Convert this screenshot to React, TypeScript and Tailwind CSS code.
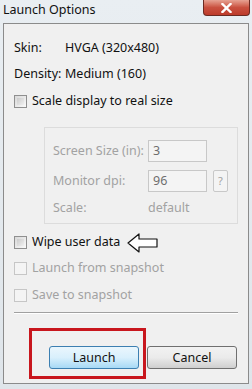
import React from "react";

// Small Win7-style checkbox
function Check({ disabled = false }: { disabled?: boolean }) {
  return (
    <span
      className={
        disabled
          ? "w-[13px] h-[13px] border border-[#c6c6c6] bg-[#f4f4f4] shrink-0"
          : "w-[13px] h-[13px] border border-[#8f8f8f] bg-gradient-to-br from-[#d8d8d8] to-[#fafafa] shrink-0 p-[2px]"
      }
    >
      {!disabled && <span className="block w-full h-full bg-gradient-to-br from-[#cbcbcb] to-[#f0f0f0]" />}
    </span>
  );
}

function CheckRow({ label, disabled = false }: { label: string; disabled?: boolean }) {
  return (
    <div className="flex items-center h-[20px] gap-[5px]">
      <Check disabled={disabled} />
      <span className={disabled ? "text-[#a2a2a2]" : "text-[#111]"}>{label}</span>
    </div>
  );
}

export default function App() {
  return (
    <div
      className="w-[252px] h-[389px] flex flex-col bg-gradient-to-b from-[#e9eef2] to-[#dfe5ea] overflow-hidden"
      style={{ fontFamily: '"Noto Sans", "Open Sans", sans-serif' }}
    >
      {/* title bar */}
      <div className="h-[23px] flex items-start justify-between pl-[3px] shrink-0">
        <span className="text-[12.5px] leading-[20px] text-[#111]">Launch Options</span>
        <div className="w-[47px] h-[16px] mr-[2px] rounded-b-[4px] border border-t-0 border-[#6b2a22] bg-gradient-to-b from-[#e6a293] via-[#c9503f] to-[#bd3b2b] flex items-center justify-center">
          <svg width="11" height="10" viewBox="0 0 11 10">
            <path d="M1.5 1 L9.5 9 M9.5 1 L1.5 9" stroke="#fff" strokeWidth="2.4" strokeLinecap="square" />
          </svg>
        </div>
      </div>

      {/* panel */}
      <div className="relative mx-[3px] mb-[5px] flex-1 border border-[#8b8b8b] bg-[#f0f0f0] text-[12.5px] leading-[20px] pl-[10px] pt-[14px]">
        <div className="flex h-[20px] items-center text-[#111]">
          <span className="w-[51px]">Skin:</span>
          <span>HVGA (320x480)</span>
        </div>
        <div className="flex h-[20px] items-center mt-[6px] text-[#111]">
          <span className="w-[51px]">Density:</span>
          <span>Medium (160)</span>
        </div>
        <div className="mt-[7px]">
          <CheckRow label="Scale display to real size" />
        </div>

        {/* disabled group */}
        <div className="ml-[30px] mt-[16px] w-[194px] h-[97px] border border-[#dcdcdc] pl-[8px] pt-[12px] text-[#a2a2a2]">
          <div className="flex items-center h-[22px]">
            <span className="w-[95px]">Screen Size (in):</span>
            <span className="w-[59px] h-[22px] border border-[#c8c8c8] bg-[#f4f4f4] pl-[4px] leading-[20px] text-[#6e6e6e]">3</span>
          </div>
          <div className="flex items-center h-[22px] mt-[8px]">
            <span className="w-[95px]">Monitor dpi:</span>
            <span className="w-[59px] h-[22px] border border-[#c8c8c8] bg-[#f4f4f4] pl-[4px] leading-[20px] text-[#6e6e6e]">96</span>
            <span className="ml-[6px] w-[15px] h-[22px] border border-[#c8c8c8] rounded-[2px] bg-[#f4f4f4] text-[11px] flex items-center justify-center">?</span>
          </div>
          <div className="flex items-center h-[20px] mt-[6px]">
            <span className="w-[95px]">Scale:</span>
            <span>default</span>
          </div>
        </div>

        <div className="mt-[8px]">
          <CheckRow label="Wipe user data" />
        </div>
        <div className="mt-[6px]">
          <CheckRow label="Launch from snapshot" disabled />
        </div>
        <div className="mt-[7px]">
          <CheckRow label="Save to snapshot" disabled />
        </div>

        <div className="mt-[7px] mr-[10px] h-[1px] bg-[#a0a0a0] border-b border-white box-content" />

        <div className="flex justify-end gap-[8px] pr-[11px] mt-[32px]">
          <button className="w-[90px] h-[23px] rounded-[3px] border border-[#3c7fb1] bg-gradient-to-b from-[#eaf6fd] via-[#d9f0fc] to-[#a7d9f5] text-[#111] text-[12.5px]">
            Launch
          </button>
          <button className="w-[90px] h-[23px] rounded-[3px] border border-[#707070] bg-gradient-to-b from-[#f2f2f2] via-[#ebebeb] to-[#cfcfcf] text-[#111] text-[12.5px]">
            Cancel
          </button>
        </div>

        {/* red highlight around Launch */}
        <div className="absolute left-[25px] top-[304px] w-[117px] h-[51px] border-[3px] border-[#c8161d]" />

        {/* hand-drawn arrow */}
        <svg className="absolute left-[123px] top-[209px]" width="32" height="20" viewBox="0 0 32 20">
          <path d="M1 10 L12 1 L12 6 L30 6 L30 14 L12 14 L12 19 Z" fill="#fff" stroke="#111" strokeWidth="1.2" strokeLinejoin="round" />
        </svg>
      </div>
    </div>
  );
}
